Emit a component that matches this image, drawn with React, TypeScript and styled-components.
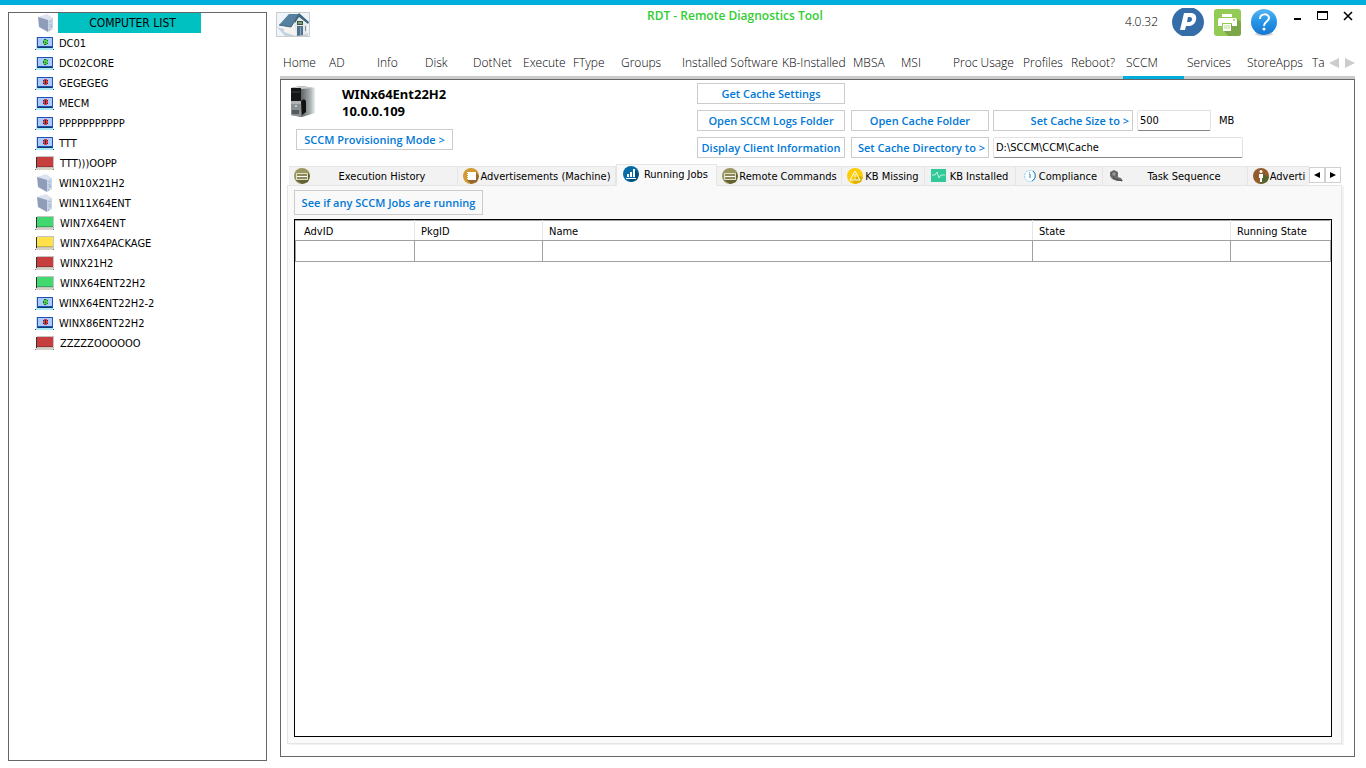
import React, { useState } from "react";
import styled, { createGlobalStyle, css } from "styled-components";

const tahoma = '"DejaVu Sans Condensed", "Noto Sans", sans-serif';
const segoe = '"Open Sans", "Noto Sans", sans-serif';

const GlobalStyle = createGlobalStyle`
  *, *::before, *::after { box-sizing: border-box; }
  body { margin: 0; background: #fff; color: #000; font: 11px/16px ${tahoma}; }
  button, input { font: inherit; color: inherit; border-radius: 0; margin: 0; }
  button { cursor: pointer; }
  ul { list-style: none; margin: 0; padding: 0; }
  svg { display: block; flex: none; }
`;

const Window = styled.div`
  display: grid;
  grid-template-columns: 259px minmax(0, 1fr);
  gap: 9px;
  min-height: 100vh;
  padding: 7px 11px 7px 8px;
  border-top: 5px solid #00aedb;
`;

/* Sidebar */

const Sidebar = styled.aside`
  border: 1px solid #666;
`;

const ListHeading = styled.div`
  display: flex;
  height: 20px;
  padding-left: 27px;
`;

const ListTitle = styled.h2`
  width: 143px;
  margin: 0 0 0 3px;
  padding-left: 6px;
  background: #00c1c1;
  font-size: 12px;
  font-weight: 400;
  line-height: 20px;
  text-align: center;
`;

const ComputerButton = styled.button`
  display: flex;
  align-items: center;
  gap: 5px;
  width: 100%;
  height: 20px;
  padding: 0 0 0 26px;
  border: 0;
  background: none;
  text-align: left;
  white-space: nowrap;
`;

const ComputerName = styled.span`
  padding-top: 2px;
`;

/* Header */

const Main = styled.main`
  display: flex;
  flex-direction: column;
  min-width: 0;
  padding-bottom: 4px;
`;

const Header = styled.header`
  display: flex;
  align-items: flex-start;
  height: 38px;
`;

const HomeButton = styled.button`
  width: 34px;
  height: 25px;
  padding: 0;
  border: 1px solid #ccc;
  background: #eef5fb;
`;

const AppTitle = styled.h1`
  flex: 1;
  margin: -4px 0 0 337px;
  color: #32cd32;
  font: 600 12px/16px ${segoe};
  white-space: nowrap;
`;

const Version = styled.span`
  margin: 2px 14px 0 0;
  font: 300 12px/16px ${segoe};
`;

const HeaderTools = styled.div`
  display: flex;
  align-items: center;
  gap: 10px;
  height: 28px;
  margin-top: -4px;
`;

const ToolButton = styled.button`
  padding: 0;
  border: 0;
  background: none;
`;

const WindowControls = styled.div`
  display: flex;
  gap: 15px;
  margin: -2px 2px 0 15px;
`;

/* Main navigation */

const MainNav = styled.nav`
  display: flex;
  height: 29px;
  margin-left: 4px;
  border-bottom: 3px solid #ccc;
`;

const MainTabs = styled.ul`
  display: flex;
  flex: 0 1 1046px;
  height: 29px;
  overflow: hidden;
`;

const MainTab = styled.li<{ $width: number }>`
  flex: 0 0 ${(p) => p.$width}px;
`;

const MainTabButton = styled.button<{ $active: boolean }>`
  width: 100%;
  height: 29px;
  padding: 0 0 0 3px;
  border: 0;
  border-bottom: 3px solid ${(p) => (p.$active ? "#00aedb" : "transparent")};
  background: none;
  font: 300 12px/16px ${segoe};
  text-align: left;
  white-space: nowrap;
`;

const NavScroller = styled.div`
  display: flex;
  align-items: center;
  gap: 6px;
  height: 26px;
  margin-left: auto;
`;

/* Panel */

const Panel = styled.section`
  display: flex;
  flex-direction: column;
  flex: 1;
  margin-left: 4px;
  padding: 3px 12px 12px 6px;
  border: 1px solid #666;
`;

const PanelTop = styled.div`
  display: flex;
  align-items: flex-start;
  height: 81px;
`;

const Machine = styled.div`
  width: 410px;
  flex: none;
  padding: 3px 0 0 9px;
`;

const MachineInfo = styled.div`
  display: flex;
  gap: 26px;
  height: 43px;
  margin-left: -6px;
`;

const MachineName = styled.h2`
  margin: 0;
  font: 700 13px/17px "Noto Sans", sans-serif;
`;

const ActionButton = styled.button<{ $width: number; $end?: boolean; $large?: boolean }>`
  width: ${(p) => p.$width}px;
  height: ${(p) => (p.$large ? 25 : 21)}px;
  padding: 0 3px;
  border: 1px solid #ccc;
  background: none;
  color: #0078d7;
  font: 600 11px/16px ${segoe};
  text-align: ${(p) => (p.$end ? "right" : "center")};
  white-space: nowrap;
`;

const Actions = styled.div`
  display: flex;
  flex-direction: column;
  gap: 6px;
`;

const ActionRow = styled.div`
  display: flex;
  gap: 4px;
  height: 21px;

  > :first-child { margin-right: 2px; }
`;

const TextField = styled.input<{ $width: number }>`
  width: ${(p) => p.$width}px;
  height: 21px;
  padding: 0 2px 1px;
  border: 1px solid #e3e3e3;
  border-bottom-color: #868686;
  border-radius: 2px;
  background: #fff;
`;

const Unit = styled.label`
  padding: 3px 0 0 4px;
`;

/* Job tabs */

const SubTabBar = styled.div`
  position: relative;
  display: flex;
  align-items: flex-end;
  height: 22px;
  margin: 0 1px -1px 2px;
`;

const SubTabs = styled.ul`
  display: flex;
  flex: 0 1 1021px;
  align-items: flex-end;
  height: 22px;
  overflow: hidden;
`;

const SubTabItem = styled.li<{ $width: number }>`
  flex: 0 0 ${(p) => p.$width}px;
  min-width: 0;
`;

const SubTabButton = styled.button<{ $active: boolean }>`
  display: flex;
  align-items: center;
  width: 100%;
  height: 20px;
  padding: 0 3px 0 5px;
  border: 1px solid #e5e5e5;
  border-left-width: 0;
  background: #f2f2f2;
  white-space: nowrap;
  ${(p) =>
    p.$active &&
    css`
      height: 22px;
      padding: 0 3px 2px 6px;
      border-left-width: 1px;
      border-bottom-color: #f9f9f9;
      background: #f9f9f9;
    `}
`;

const SubTabLabel = styled.span`
  flex: 1;
  padding-top: 2px;
  text-align: center;
`;

const SubScroller = styled.div`
  display: flex;
  height: 17px;
  margin: 0 0 2px;
`;

const ScrollButton = styled.button`
  display: flex;
  align-items: center;
  justify-content: center;
  width: 16px;
  height: 16px;
  padding: 0;
  border: 1px solid #d0d0d0;
  background: #fff;
`;

const TabPage = styled.div`
  display: flex;
  flex-direction: column;
  flex: 1;
  padding: 4px 9px 6px 6px;
  border: 1px solid #e5e5e5;
  background: #f9f9f9;
  box-shadow: 2px 1px 0 #f2f2f2;
`;

const TableFrame = styled.div`
  flex: 1;
  margin-top: 4px;
  border: 1px solid #000;
  background: #fff;
`;

const JobsTable = styled.table`
  width: 100%;
  table-layout: fixed;
  border-collapse: collapse;

  th, td {
    height: 21px;
    padding: 0 0 0 6px;
    border: 1px solid #a0a0a0;
  }
  th {
    height: 20px;
    padding-top: 2px;
    border-left-color: #e5e5e5;
    border-right-color: #e5e5e5;
    font-weight: 400;
    text-align: left;
  }
  tr > :first-child { padding-left: 8px; }
`;

/* Icons */

const TowerIcon = () => (
  <svg width="19" height="20" viewBox="0 0 19 20" aria-hidden="true">
    <path d="M2 4 11 1l6 4-7 3z" fill="#dde4f0" />
    <path d="M2 4 12 7v12L3 14z" fill="#8f9dbb" />
    <path d="m12 7 5-2v11l-5 3z" fill="#c9d4e4" />
    <path d="m13 9 3-1m-3 4 3-1" stroke="#aebad0" />
    <path d="m14 14 2-1m-3 4h1" stroke="#8fa2be" />
  </svg>
);

const LaptopIcon = ({ dot }: { dot: string }) => (
  <svg width="19" height="16" viewBox="0 0 19 16" shapeRendering="crispEdges" aria-hidden="true">
    <path d="M1 13h17v1h1v1H0v-1h1z" fill="#a9ecf8" />
    <path d="M0 14h1v1H0zM18 14h1v1h-1z" fill="#37506b" />
    <path d="M1 2h1v11H1z" fill="#ddd" />
    <path d="M2 2h16v11H2z" fill="#1e54b7" />
    <path d="M3 3h14v8H3z" fill="#a9cbff" />
    <path d="M3 12h14v1H3z" fill="#173969" />
    <path d="M9 4h3v1h1v4h-1v1H9V9H8V5h1z" fill={dot} />
    {dot === "#e33b3b" ? (
      <path d="M10 5h1v4h-1zM8 5h1v1H8zM12 5h1v1h-1zM8 8h1v1H8zM12 8h1v1h-1z" fill="#252d48" />
    ) : (
      <path d="M9 4h2v1H9zM8 6h1v2H8zM12 5h1v1h-1zM10 7h1v1h-1zM12 8h1v1h-1zM9 9h2v1H9z" fill="#24633b" />
    )}
  </svg>
);

const ScreenIcon = ({ fill }: { fill: string }) => (
  <svg width="20" height="16" viewBox="0 0 20 16" shapeRendering="crispEdges" aria-hidden="true">
    <path d="M2 1h17v12H2z" fill="#c4c4c4" />
    <path d="M1 2h1v11H1z" fill="#333" />
    <path d="M2 2h16v10H2z" fill={fill} />
    <path d="M2 11h16v1H2z" fill="#000" opacity=".2" />
    <path d="M1 13h18v2H1z" fill="#d6d3c6" />
    <path d="M0 14h1v1H0zM18 14h1v1h-1z" fill="#777" />
  </svg>
);

const HouseIcon = () => (
  <svg width="32" height="23" viewBox="0 0 32 23" aria-hidden="true">
    <path d="M0 14 17 19 31 20v3H8z" fill="#c3d3df" />
    <path d="m7 12 9-7 3 2v16L7 19z" fill="#f4f3f0" />
    <path d="m17 10 5-6 8 8v9l-11 2z" fill="#e9e8e6" />
    <path d="M2 12 12 1h10l-8 13z" fill="#55809f" />
    <path d="m2 12 12 2 8-13" fill="none" stroke="#42667f" />
    <path d="m22 0 10 9-1 2-9-7-4 6-1-2z" fill="#426782" />
    <path d="M20 8h6v4h-6z" fill="#3d5146" />
    <path d="M21 9h4v2h-4z" fill="#70a276" />
    <path d="M20 13h6v9l-6 1z" fill="#4e718d" />
    <path d="M23 14h1v8h-1z" fill="#87a5bd" />
    <path d="M28 13h1v5h-1z" fill="#78909f" />
  </svg>
);

const PaypalIcon = () => (
  <svg width="32" height="28" viewBox="0 0 32 28" aria-hidden="true">
    <ellipse cx="16" cy="14" rx="16" ry="15" fill="#346da8" />
    <path
      fillRule="evenodd"
      d="M12 5h7c4 0 6 3 5 7-1 4-4 6-8 6h-2l-1 4H8zm4 4-1 5h2c2 0 3-1 3-3 0-1-1-2-2-2z"
      fill="#fff"
    />
  </svg>
);

const PrinterIcon = () => (
  <svg width="27" height="27" viewBox="0 0 27 27" aria-hidden="true">
    <rect width="27" height="27" rx="3" fill="#94cb57" />
    <path d="m22 9 5 4v11q0 3-3 3H14l-4-5 7-6z" fill="#7ba748" />
    <path d="M8 5h10v3H8zM6 9h15q2 0 2 2v6h-5v-3H8v3H4v-6q0-2 2-2z" fill="#fff" />
    <path d="M9 15h8v7H9z" fill="#fff" />
    <path d="M10 17h6m-6 2h6" stroke="#b8db91" />
    <circle cx="20" cy="11" r="1" fill="#94cb57" />
  </svg>
);

const HelpIcon = () => (
  <svg width="27" height="27" viewBox="0 0 27 27" aria-hidden="true">
    <defs>
      <linearGradient id="help" x2="0" y2="1">
        <stop stopColor="#55b5f3" />
        <stop offset=".5" stopColor="#2493e6" />
        <stop offset="1" stopColor="#1777cf" />
      </linearGradient>
    </defs>
    <ellipse cx="13" cy="25" rx="9" ry="2" fill="#d5d5d5" />
    <circle cx="13" cy="13" r="13" fill="url(#help)" />
    <path d="M9 10c0-6 9-6 9-1 0 4-5 3-5 8" fill="none" stroke="#fff" strokeWidth="2" />
    <circle cx="13" cy="20" r="1.5" fill="#fff" />
  </svg>
);

const Triangle = ({ flip, size, color }: { flip?: boolean; size: number; color: string }) => (
  <svg width={size} height={size} viewBox="0 0 10 10" aria-hidden="true">
    <path d={flip ? "M0 0 10 5 0 10z" : "M10 0 0 5 10 10z"} fill={color} />
  </svg>
);

const ServerIcon = () => (
  <svg width="26" height="32" viewBox="0 0 26 32" aria-hidden="true">
    <defs>
      <linearGradient id="case">
        <stop offset=".4" stopColor="#5c6163" />
        <stop offset=".8" stopColor="#a7afb1" />
        <stop offset="1" stopColor="#eceeee" />
      </linearGradient>
    </defs>
    <path d="m1 2 10-2 14 2v25l-13 4-11-2z" fill="url(#case)" />
    <path d="m1 2 10-2 14 2-14 1z" fill="#c9cdce" />
    <path d="m1 3 10 1v27L1 29z" fill="#8b9193" />
    <path d="M1 2h10v13H1z" fill="#151617" />
    <path d="M1 6h9" stroke="#3f4142" />
    <path d="M1 15h10v3H1z" fill="#aeb4b6" />
    <path d="M2 25h7m-7 2h7" stroke="#202224" />
    <path d="m11 15 3-2 2 2v11l-4 3z" fill="#111" />
    <circle cx="6" cy="20" r="1" fill="#d5dadb" />
  </svg>
);

type JobIconKind = "card" | "book" | "chart" | "warning" | "pulse" | "clock" | "tools" | "person";

const JobIcon = ({ kind }: { kind: JobIconKind }) => (
  <svg width="16" height="16" viewBox="0 0 16 16" aria-hidden="true">
    {kind === "card" && (
      <>
        <circle cx="8" cy="8" r="8" fill="#99965f" />
        <path d="m14 4 2 4-2 6-6 2-6-4h12z" fill="#636234" />
        <path d="M2.5 5.5h11v6h-11z" fill="#8c8a58" stroke="#e2e0c6" />
        <path d="M3 8.5h10" stroke="#fff" />
      </>
    )}
    {kind === "book" && (
      <>
        <circle cx="8" cy="8" r="8" fill="#d19a32" />
        <path d="m12 3 4 5-2 6-6 2-4-4h8z" fill="#96672f" />
        <path d="M5 4h8v8H5z" fill="#fff" />
        <path d="M4.5 4v8" stroke="#fff" strokeDasharray="1 1" />
      </>
    )}
    {kind === "chart" && (
      <>
        <circle cx="8" cy="8" r="8" fill="#056ba5" />
        <path d="m12 4 4 4-2 6-6 2-4-4h8z" fill="#064b76" />
        <path d="M4 8h2v3H4zm3-2h2v5H7zm3-3h2v8h-2zM3 12h10v1H3z" fill="#fff" />
      </>
    )}
    {kind === "warning" && (
      <>
        <circle cx="8" cy="8" r="8" fill="#ffcb05" />
        <path d="m12 8 4 1-2 5-6 2-4-4z" fill="#dbaf00" />
        <path d="m8 3 5 9H3z" fill="none" stroke="#fff" />
        <path d="M8 6v3m0 1v1" stroke="#fff" />
      </>
    )}
    {kind === "pulse" && (
      <>
        <path d="M1 1h15v13H1z" fill="#31c997" />
        <path d="M2 7h3l2-3 2 6 2-3h4" fill="none" stroke="#bdf1df" />
      </>
    )}
    {kind === "clock" && (
      <>
        <circle cx="9" cy="8" r="5.5" fill="#fff" stroke="#8acdf2" strokeDasharray="2 1" />
        <path d="M12 3a6 6 0 0 1-1 10" fill="none" stroke="#1477c8" />
        <path d="M9 6v4M8 5h1" stroke="#1477c8" />
      </>
    )}
    {kind === "tools" && (
      <>
        <path d="m2 4 4-2 4 2v5l3 1 2 3H9l-5-2-2-3z" fill="#707070" />
        <circle cx="6" cy="6" r="2.5" fill="#939393" stroke="#555" />
        <path d="m5 10 9 3" stroke="#444" />
      </>
    )}
    {kind === "person" && (
      <>
        <circle cx="8" cy="8" r="8" fill="#945c2b" />
        <path d="m10 6 6 3-2 5-7 2V9z" fill="#52652c" />
        <circle cx="8" cy="3.5" r="1.5" fill="#fff" />
        <path d="M6 6h4v4H9v4H7v-4H6z" fill="#fff" />
      </>
    )}
  </svg>
);

/* Data */

type Status = "tower" | "online" | "offline" | "red" | "green" | "yellow";

const computers: [string, Status][] = [
  ["DC01", "online"],
  ["DC02CORE", "online"],
  ["GEGEGEG", "offline"],
  ["MECM", "offline"],
  ["PPPPPPPPPPP", "offline"],
  ["TTT", "offline"],
  ["TTT)))OOPP", "red"],
  ["WIN10X21H2", "tower"],
  ["WIN11X64ENT", "tower"],
  ["WIN7X64ENT", "green"],
  ["WIN7X64PACKAGE", "yellow"],
  ["WINX21H2", "red"],
  ["WINX64ENT22H2", "green"],
  ["WINX64ENT22H2-2", "online"],
  ["WINX86ENT22H2", "offline"],
  ["ZZZZZOOOOOO", "red"],
];

const statusIcons: Record<Status, React.ReactNode> = {
  tower: <TowerIcon />,
  online: <LaptopIcon dot="#4fd34f" />,
  offline: <LaptopIcon dot="#e33b3b" />,
  red: <ScreenIcon fill="#c73e3e" />,
  green: <ScreenIcon fill="#42d870" />,
  yellow: <ScreenIcon fill="#ffe24b" />,
};

const mainTabs: [string, number][] = [
  ["Home", 46],
  ["AD", 48],
  ["Info", 48],
  ["Disk", 48],
  ["DotNet", 50],
  ["Execute", 50],
  ["FType", 48],
  ["Groups", 61],
  ["Installed Software", 100],
  ["KB-Installed", 71],
  ["MBSA", 48],
  ["MSI", 52],
  ["Proc Usage", 70],
  ["Profiles", 48],
  ["Reboot?", 55],
  ["SCCM", 61],
  ["Services", 60],
  ["StoreApps", 65],
  ["Ta", 17],
];

const jobTabs: [string, number, JobIconKind][] = [
  ["Execution History", 169, "card"],
  ["Advertisements (Machine)", 158, "book"],
  ["Running Jobs", 101, "chart"],
  ["Remote Commands", 125, "card"],
  ["KB Missing", 83, "warning"],
  ["KB Installed", 91, "pulse"],
  ["Compliance", 87, "clock"],
  ["Task Sequence", 145, "tools"],
  ["Adverti", 62, "person"],
];

export default function App() {
  const [mainTab, setMainTab] = useState("SCCM");
  const [jobTab, setJobTab] = useState("Running Jobs");

  return (
    <>
      <GlobalStyle />
      <Window>
        <Sidebar>
          <ListHeading>
            <TowerIcon />
            <ListTitle>COMPUTER LIST</ListTitle>
          </ListHeading>
          <ul>
            {computers.map(([name, status]) => (
              <li key={name}>
                <ComputerButton type="button">
                  {statusIcons[status]}
                  <ComputerName>{name}</ComputerName>
                </ComputerButton>
              </li>
            ))}
          </ul>
        </Sidebar>

        <Main>
          <Header>
            <HomeButton type="button" aria-label="Home">
              <HouseIcon />
            </HomeButton>
            <AppTitle>RDT - Remote Diagnostics Tool</AppTitle>
            <Version>4.0.32</Version>
            <HeaderTools>
              <ToolButton type="button" aria-label="Donate">
                <PaypalIcon />
              </ToolButton>
              <ToolButton type="button" aria-label="Print">
                <PrinterIcon />
              </ToolButton>
              <ToolButton type="button" aria-label="Help">
                <HelpIcon />
              </ToolButton>
            </HeaderTools>
            <WindowControls>
              <ToolButton type="button" aria-label="Minimize">
                <svg width="9" height="12" viewBox="0 0 9 12">
                  <path d="M1 8h7v2H1z" />
                </svg>
              </ToolButton>
              <ToolButton type="button" aria-label="Maximize">
                <svg width="11" height="12" viewBox="0 0 11 12">
                  <path d="M.5 1.5h10v8H.5z" fill="none" stroke="#000" />
                  <path d="M0 1h11v2H0z" />
                </svg>
              </ToolButton>
              <ToolButton type="button" aria-label="Close">
                <svg width="10" height="12" viewBox="0 0 10 12">
                  <path d="m1 2 8 8M9 2l-8 8" stroke="#000" strokeWidth="1.6" />
                </svg>
              </ToolButton>
            </WindowControls>
          </Header>

          <MainNav>
            <MainTabs>
              {mainTabs.map(([name, width]) => (
                <MainTab key={name} $width={width}>
                  <MainTabButton type="button" $active={name === mainTab} onClick={() => setMainTab(name)}>
                    {name}
                  </MainTabButton>
                </MainTab>
              ))}
            </MainTabs>
            <NavScroller>
              <ToolButton type="button" aria-label="Previous tabs">
                <Triangle size={10} color="#ccc" />
              </ToolButton>
              <ToolButton type="button" aria-label="Next tabs">
                <Triangle flip size={10} color="#ccc" />
              </ToolButton>
            </NavScroller>
          </MainNav>

          <Panel>
            <PanelTop>
              <Machine>
                <MachineInfo>
                  <ServerIcon />
                  <MachineName>
                    WINx64Ent22H2
                    <br />
                    10.0.0.109
                  </MachineName>
                </MachineInfo>
                <ActionButton type="button" $width={157}>
                  SCCM Provisioning Mode &gt;
                </ActionButton>
              </Machine>
              <Actions>
                <ActionButton type="button" $width={148}>
                  Get Cache Settings
                </ActionButton>
                <ActionRow>
                  <ActionButton type="button" $width={148}>
                    Open SCCM Logs Folder
                  </ActionButton>
                  <ActionButton type="button" $width={138}>
                    Open Cache Folder
                  </ActionButton>
                  <ActionButton type="button" $width={140} $end>
                    Set Cache Size to &gt;
                  </ActionButton>
                  <TextField id="cache-size" $width={74} defaultValue="500" />
                  <Unit htmlFor="cache-size">MB</Unit>
                </ActionRow>
                <ActionRow>
                  <ActionButton type="button" $width={148}>
                    Display Client Information
                  </ActionButton>
                  <ActionButton type="button" $width={138} $end>
                    Set Cache Directory to &gt;
                  </ActionButton>
                  <TextField aria-label="Cache directory" $width={250} defaultValue="D:\SCCM\CCM\Cache" />
                </ActionRow>
              </Actions>
            </PanelTop>

            <SubTabBar>
              <SubTabs>
                {jobTabs.map(([name, width, icon]) => (
                  <SubTabItem key={name} $width={width}>
                    <SubTabButton type="button" $active={name === jobTab} onClick={() => setJobTab(name)}>
                      <JobIcon kind={icon} />
                      <SubTabLabel>{name}</SubTabLabel>
                    </SubTabButton>
                  </SubTabItem>
                ))}
              </SubTabs>
              <SubScroller>
                <ScrollButton type="button" aria-label="Previous job tabs">
                  <Triangle size={6} color="#000" />
                </ScrollButton>
                <ScrollButton type="button" aria-label="Next job tabs">
                  <Triangle flip size={6} color="#000" />
                </ScrollButton>
              </SubScroller>
            </SubTabBar>

            <TabPage>
              <ActionButton type="button" $width={189} $large>
                See if any SCCM Jobs are running
              </ActionButton>
              <TableFrame>
                <JobsTable>
                  <colgroup>
                    <col width="119" />
                    <col width="128" />
                    <col />
                    <col width="198" />
                    <col width="100" />
                  </colgroup>
                  <thead>
                    <tr>
                      <th scope="col">AdvID</th>
                      <th scope="col">PkgID</th>
                      <th scope="col">Name</th>
                      <th scope="col">State</th>
                      <th scope="col">Running State</th>
                    </tr>
                  </thead>
                  <tbody>
                    <tr>
                      <td />
                      <td />
                      <td />
                      <td />
                      <td />
                    </tr>
                  </tbody>
                </JobsTable>
              </TableFrame>
            </TabPage>
          </Panel>
        </Main>
      </Window>
    </>
  );
}
